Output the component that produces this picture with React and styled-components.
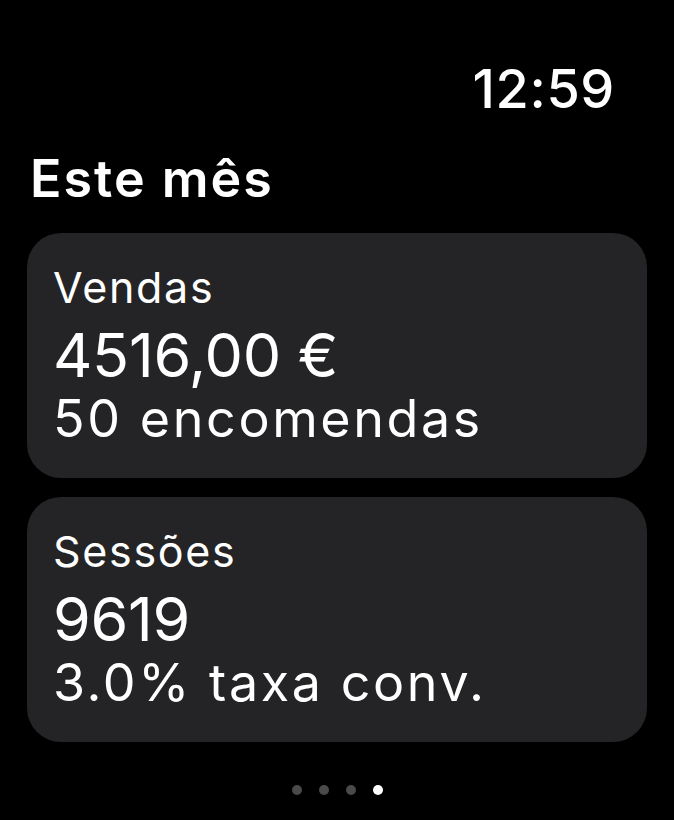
import styled, { createGlobalStyle } from "styled-components";

const GlobalStyle = createGlobalStyle`
  html, body {
    margin: 0;
    padding: 0;
    background: #000;
  }
  body {
    font-family: Inter, "Liberation Sans", sans-serif;
    color: #fff;
  }
`;

const Screen = styled.div`
  width: 674px;
  height: 820px;
  background: #000;
  display: flex;
  flex-direction: column;
  overflow: hidden;
`;

const StatusBar = styled.div`
  display: flex;
  justify-content: flex-end;
  padding: 59px 59px 0 0;
`;

const Time = styled.span`
  font-size: 54px;
  line-height: 60px;
  font-weight: 500;
  letter-spacing: 0.6px;
`;

const Title = styled.h1`
  margin: 30px 0 0 30px;
  font-size: 52px;
  line-height: 60px;
  font-weight: 600;
  letter-spacing: 2px;
`;

const CardList = styled.div`
  display: flex;
  flex-direction: column;
  gap: 19px;
  margin: 24px 27px 0;
`;

const Card = styled.div`
  background: #242426;
  border-radius: 34px;
  padding: 24px 26px 34px;
  height: 245px;
  box-sizing: border-box;
  display: flex;
  flex-direction: column;
`;

const Label = styled.div`
  font-size: 43px;
  line-height: 60px;
  letter-spacing: 1.7px;
`;

const Value = styled.div`
  font-size: 61px;
  line-height: 77px;
  letter-spacing: -0.3px;
`;

const Sub = styled.div`
  font-size: 52px;
  line-height: 50px;
  letter-spacing: 2.6px;
`;

const Pager = styled.div`
  display: flex;
  justify-content: center;
  gap: 17px;
  margin-top: 43px;
`;

const Dot = styled.span`
  width: 10px;
  height: 10px;
  border-radius: 50%;
  background: ${(p) => (p.$active ? "#fff" : "#4a4a4c")};
`;

const stats = [
  { label: "Vendas", value: "4516,00 €", sub: "50 encomendas" },
  { label: "Sessões", value: "9619", sub: "3.0% taxa conv." },
];

export default function App() {
  return (
    <Screen>
      <GlobalStyle />
      <StatusBar>
        <Time>12:59</Time>
      </StatusBar>
      <Title>Este mês</Title>
      <CardList>
        {stats.map((s) => (
          <Card key={s.label}>
            <Label>{s.label}</Label>
            <Value>{s.value}</Value>
            <Sub>{s.sub}</Sub>
          </Card>
        ))}
      </CardList>
      <Pager>
        {[0, 1, 2, 3].map((i) => (
          <Dot key={i} $active={i === 3} />
        ))}
      </Pager>
    </Screen>
  );
}
